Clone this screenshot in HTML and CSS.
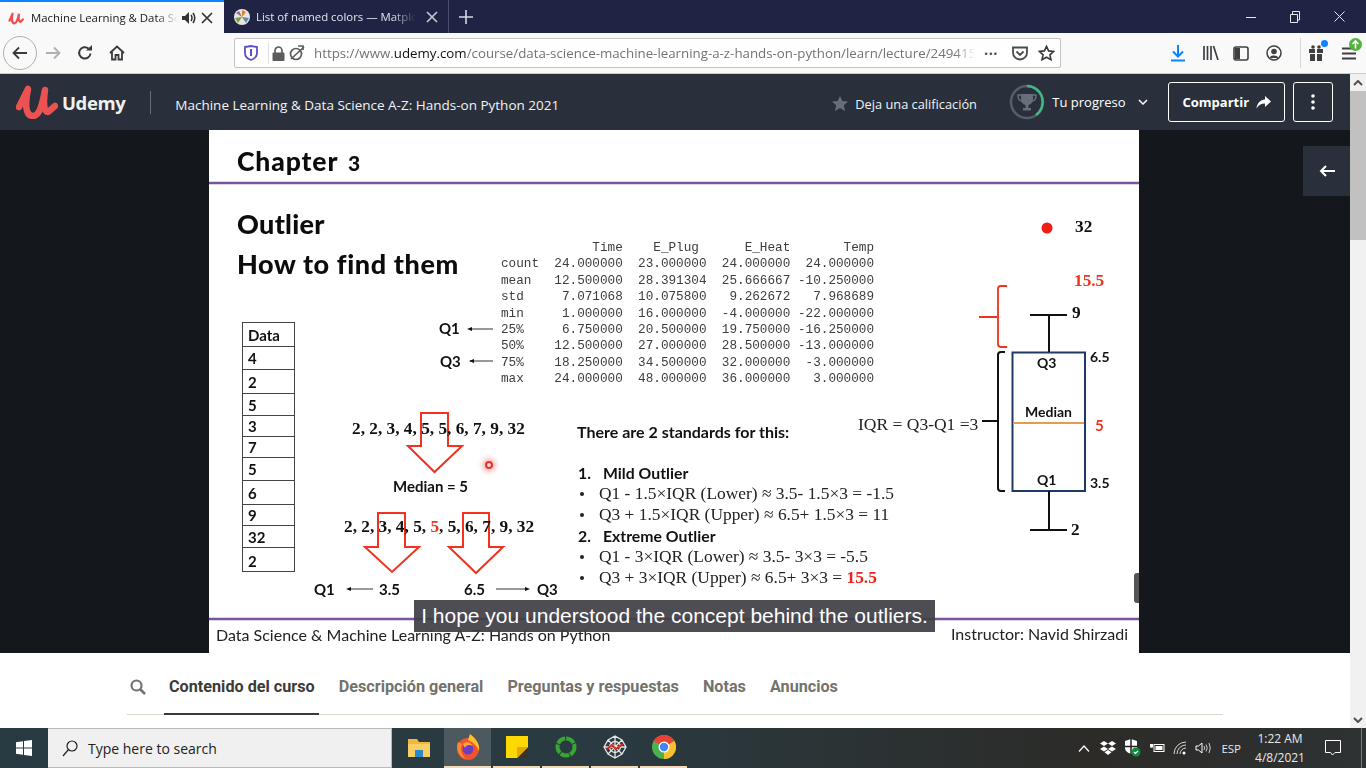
FILE: index.html
```html
<!DOCTYPE html>
<html>

<head>
  <meta name="viewport" content="width=device-width,initial-scale=1.0">
  <meta charset="utf-8">
  <title>Machine Learning &amp; Data Science</title>
  <link rel="stylesheet" href="styles.css">
</head>

<body>
  <!-- browser tabs -->
  <div class="tabbar">
    <div class="tab tab-active">
      <svg class="fav" width="16" height="16" viewBox="0 0 42 34"><path d="M4 24 L12 6 M12 6 C9 20 10 31 17 31 C24 31 27 14 29 6 C27 18 28 26 33 27 L39 21" fill="none" stroke="#ec5252" stroke-width="6" stroke-linecap="round"/></svg>
      <span class="tab-text t1">Machine Learning &amp; Data Sc</span>
      <svg class="tab-sound" width="16" height="14" viewBox="0 0 16 14"><path d="M1 5 H4 L8 1 V13 L4 9 H1 Z" fill="#333"/><path d="M10 4 Q12 7 10 10 M12 2 Q15.500 7 12 12" fill="none" stroke="#333" stroke-width="1.500"/></svg>
      <svg class="tab-x" width="12" height="12" viewBox="0 0 12 12"><path d="M1 1 L11 11 M11 1 L1 11" stroke="#333" stroke-width="1.700"/></svg>
    </div>
    <div class="tab tab-other">
      <svg class="fav2" width="16" height="16" viewBox="0 0 16 16"><circle cx="8" cy="8" r="8" fill="#e9e6dc"/><path d="M8 8 L8 1 L12 3 Z" fill="#d9822b"/><path d="M8 8 L15 9 L12 14 Z" fill="#5b8db8"/><path d="M8 8 L4 14 L1 9 Z" fill="#7a9a4a"/><path d="M8 8 L2 4 L5 2 Z" fill="#8c6a9e"/></svg>
      <span class="tab-text t2">List of named colors — Matplo</span>
      <svg class="tab-x" width="12" height="12" viewBox="0 0 12 12"><path d="M1 1 L11 11 M11 1 L1 11" stroke="#c4c5cf" stroke-width="1.700"/></svg>
    </div>
    <div class="tab-plus">
      <svg width="14" height="14" viewBox="0 0 14 14"><path d="M7 0 V14 M0 7 H14" stroke="#d7d8e0" stroke-width="1.600"/></svg>
    </div>
    <div class="win-btns">
      <svg width="10" height="10" viewBox="0 0 10 10"><path d="M0 5.500 H10" stroke="#e8e8ee" stroke-width="1"/></svg>
      <svg width="10" height="12" viewBox="0 0 10 12"><path d="M.5 3.500 H7.500 V11.500 H.5 Z M2.500 3.500 V.5 H9.500 V9 H7.500" fill="none" stroke="#e8e8ee" stroke-width="1"/></svg>
      <svg width="11" height="11" viewBox="0 0 11 11"><path d="M.5 .5 L10.500 10.500 M10.500 .5 L.5 10.500" stroke="#e8e8ee" stroke-width="1"/></svg>
    </div>
  </div>

  <!-- browser toolbar -->
  <div class="toolbar">
    <div class="nav-back">
      <svg width="16" height="14" viewBox="0 0 16 14"><path d="M15 7 H2 M7 1.500 L1.500 7 L7 12.500" fill="none" stroke="#3a3a3c" stroke-width="1.800"/></svg>
    </div>
    <svg class="nav-fwd" width="16" height="14" viewBox="0 0 16 14"><path d="M1 7 H14 M9 1.500 L14.500 7 L9 12.500" fill="none" stroke="#b1b1b3" stroke-width="1.800"/></svg>
    <svg class="nav-reload" width="16" height="16" viewBox="0 0 16 16"><path d="M13.500 8.500 A5.700 5.700 0 1 1 11.500 3.500" fill="none" stroke="#3a3a3c" stroke-width="2"/><path d="M9 5.500 H15 V0 Z" fill="#3a3a3c"/></svg>
    <svg class="nav-home" width="16" height="16" viewBox="0 0 16 16"><path d="M1 8 L8 1.500 L15 8 M3 7 V14.500 H6.500 V10 H9.500 V14.500 H13 V7" fill="none" stroke="#3a3a3c" stroke-width="1.800"/></svg>
    <div class="urlbar">
      <svg class="url-shield" width="14" height="16" viewBox="0 0 14 16"><path d="M1 2 L7 1 L13 2 V8 C13 12 10 14 7 15 C4 14 1 12 1 8 Z" fill="#fff" stroke="#5a4fcf" stroke-width="1.800"/><path d="M7 4 V11" stroke="#5a4fcf" stroke-width="2"/></svg>
      <span class="url-sep"></span>
      <svg class="url-lock" width="13" height="15" viewBox="0 0 13 15"><path d="M3 7 V4.500 A3.500 3.500 0 0 1 10 4.500 V7" fill="none" stroke="#5c5c5f" stroke-width="1.700"/><rect x="0.500" y="6.500" width="12" height="8.500" rx="1" fill="#5c5c5f"/></svg>
      <svg class="url-perm" width="16" height="16" viewBox="0 0 16 16"><circle cx="7" cy="9" r="5.500" fill="none" stroke="#5c5c5f" stroke-width="1.700"/><path d="M2 14 L15 2 M9 1 H14 V5" fill="none" stroke="#5c5c5f" stroke-width="1.700"/></svg>
      <div class="url-text">https://www.<b>udemy.com</b>/course/data-science-machine-learning-a-z-hands-on-python/learn/lecture/249415</div>
      <span class="url-dots">•••</span>
      <svg class="url-pocket" width="16" height="15" viewBox="0 0 16 15"><path d="M1 1.500 H15 V6.500 A7 7 0 0 1 1 6.500 Z M4.500 5.500 L8 9 L11.500 5.500" fill="none" stroke="#4a4a4f" stroke-width="1.800"/></svg>
      <svg class="url-star" width="17" height="16" viewBox="0 0 17 16"><path d="M8.500 1.300 L10.600 5.900 L15.700 6.400 L11.900 9.800 L13 14.700 L8.500 12.200 L4 14.700 L5.100 9.800 L1.300 6.400 L6.400 5.900 Z" fill="none" stroke="#3a3a3c" stroke-width="1.600"/></svg>
    </div>
    <div class="tool-right">
      <svg width="14" height="17" viewBox="0 0 14 17"><path d="M7 0 V11 M2 6.500 L7 11.500 L12 6.500 M0 15.500 H14" fill="none" stroke="#0a84ff" stroke-width="2"/></svg>
      <svg class="tr-lib" width="16" height="14" viewBox="0 0 16 14"><path d="M1 0 V14 M4.500 0 V14 M8 0 V14 M10.500 0 L15 14" fill="none" stroke="#3f3f42" stroke-width="1.700"/></svg>
      <svg class="tr-side" width="16" height="15" viewBox="0 0 16 15"><rect x="1" y="1" width="14" height="13" rx="2" fill="none" stroke="#3f3f42" stroke-width="1.600"/><rect x="2" y="2" width="5" height="11" fill="#3f3f42"/></svg>
      <svg class="tr-acct" width="16" height="16" viewBox="0 0 16 16"><circle cx="8" cy="8" r="7" fill="none" stroke="#3f3f42" stroke-width="1.500"/><circle cx="8" cy="6.500" r="2.800" fill="#3f3f42"/><path d="M3.500 13 C4 9.500 12 9.500 12.500 13 Z" fill="#3f3f42"/></svg>
      <span class="tool-div"></span>
      <div class="gift">
        <svg width="14" height="16" viewBox="0 0 14 16"><path d="M0 4 H6 V8 H0 Z M8 4 H14 V8 H8 Z M1 9 H6 V16 H1 Z M8 9 H13 V16 H8 Z" fill="#3f3f42"/><circle cx="4" cy="2" r="1.800" fill="#3f3f42"/><circle cx="10" cy="2" r="1.800" fill="#3f3f42"/></svg>
        <span class="gift-dot"></span>
      </div>
      <div class="menu">
        <svg width="14" height="13" viewBox="0 0 14 13"><path d="M0 1.500 H14 M0 6.500 H14 M0 11.500 H14" stroke="#3f3f42" stroke-width="1.800"/></svg>
        <svg class="menu-up" width="13" height="13" viewBox="0 0 13 13"><circle cx="6.500" cy="6.500" r="6.500" fill="#54b33e"/><path d="M6.500 10.500 V3 M3.500 6 L6.500 3 L9.500 6" fill="none" stroke="#fff" stroke-width="1.600"/></svg>
      </div>
    </div>
  </div>

  <div class="page">
    <div class="main">
      <!-- udemy header -->
      <div class="course-header">
        <svg class="logo-u" width="42" height="34" viewBox="0 0 42 34"><path d="M3 22 L12 4 C9 18 9 31 17 31 C25 31 27 14 29 5 C27 18 28 27 32 27 L39 21" fill="none" stroke="#ec5252" stroke-width="6.500" stroke-linecap="round" stroke-linejoin="round"/></svg>
        <span class="logo-text">Udemy</span>
        <span class="head-sep"></span>
        <span class="course-title">Machine Learning &amp; Data Science A-Z: Hands-on Python 2021</span>
        <svg class="rate-star" width="16" height="15" viewBox="0 0 16 15"><path d="M8 0 L10.300 5 L16 5.600 L11.800 9.300 L13 15 L8 12.100 L3 15 L4.200 9.300 L0 5.600 L5.700 5 Z" fill="#686f7a"/></svg>
        <span class="rate-text">Deja una calificación</span>
        <svg class="trophy" width="36" height="36" viewBox="0 0 36 36">
          <circle cx="18" cy="18" r="16" fill="none" stroke="#585e69" stroke-width="2.500"/>
          <path d="M18 2 A16 16 0 0 1 27 31" fill="none" stroke="#41b883" stroke-width="2.500"/>
          <path d="M12 10 H24 V15 C24 19 21 21 18 21 C15 21 12 19 12 15 Z M16.500 21 H19.500 V24 H22 V26.500 H14 V24 H16.500 Z" fill="#686f7a"/>
          <path d="M12 11 H9 C9 15 10 17 13 17 M24 11 H27 C27 15 26 17 23 17" fill="none" stroke="#686f7a" stroke-width="1.500"/>
        </svg>
        <span class="progress-text">Tu progreso</span>
        <svg class="progress-chev" width="10" height="6" viewBox="0 0 10 6"><path d="M1 1 L5 5 L9 1" fill="none" stroke="#fff" stroke-width="1.500"/></svg>
        <div class="share-btn">Compartir
          <svg width="15" height="13" viewBox="0 0 15 13"><path d="M9 0 L15 5.500 L9 11 V7.500 C5 7.500 2.500 9 0.500 12.500 C1 7.500 4 3.800 9 3.500 Z" fill="#fff"/></svg>
        </div>
        <div class="more-btn">
          <svg width="4" height="16" viewBox="0 0 4 16"><circle cx="2" cy="2" r="1.800" fill="#fff"/><circle cx="2" cy="8" r="1.800" fill="#fff"/><circle cx="2" cy="14" r="1.800" fill="#fff"/></svg>
        </div>
      </div>

      <!-- video -->
      <div class="video">
        <div class="slide">
          <svg class="slide-art" width="930" height="523" viewBox="209 130 930 523">
            <path d="M209 183 H1139 M209 619 H1139" stroke="#7a539b" stroke-width="2.500"/>
            <!-- arrows -->
            <path class="red-arrow" d="M421 413 H448 V446 H462 L434.500 472 L408 446 H421 Z"/>
            <path class="red-arrow" d="M378 513 H405 V547 H419 L392 572 L365 547 H378 Z"/>
            <path class="red-arrow" d="M463 513 H489 V547 H503 L476 573 L449 547 H463 Z"/>
            <!-- small black arrows -->
            <path class="thin" d="M470 329 H493 M470 361 H493 M350 589 H373 M496 589 H526"/>
            <path d="M467 329 L472 327 V331 Z M469 361 L474 359 V363 Z M346 589 L351 587 V591 Z M530 589 L525 587 V591 Z" fill="#111"/>
            <!-- box plot -->
            <rect x="1012.500" y="352.500" width="72.500" height="138.500" fill="none" stroke="#1f3864" stroke-width="2"/>
            <path d="M1013 423 H1084" stroke="#e89a4f" stroke-width="2"/>
            <path class="whisk" d="M1030 315 H1067 M1049 315 V352 M1049 491 V530 M1030 530 H1067"/>
            <path class="whisk" d="M1005 352 H1001 Q998 352 998 355 V488 Q998 491 1001 491 H1005 M982 421 H997"/>
            <path d="M1007 286 H1001 Q998 286 998 289 V344 Q998 347 1001 347 H1007 M979 317 H997" fill="none" stroke="#f0321e" stroke-width="1.800"/>
            <circle cx="1047" cy="228" r="5.500" fill="#f01e14"/>
          </svg>

          <span class="s-title t-chapter">Chapter <small>3</small></span>
          <span class="s-title t-outlier">Outlier</span>
          <span class="s-title t-how">How to find them</span>

          <pre class="describe">            Time    E_Plug      E_Heat       Temp
count  24.000000  23.000000  24.000000  24.000000
mean   12.500000  28.391304  25.666667 -10.250000
std     7.071068  10.075800   9.262672   7.968689
min     1.000000  16.000000  -4.000000 -22.000000
25%     6.750000  20.500000  19.750000 -16.250000
50%    12.500000  27.000000  28.500000 -13.000000
75%    18.250000  34.500000  32.000000  -3.000000
max    24.000000  48.000000  36.000000   3.000000</pre>

          <div class="data-table">
            <div>Data</div><div>4</div><div>2</div><div>5</div><div>3</div><div>7</div><div>5</div><div>6</div><div>9</div><div>32</div><div>2</div>
          </div>

          <span class="lb lb-q1a">Q1</span>
          <span class="lb lb-q3a">Q3</span>
          <span class="nums n1">2, 2, 3, 4, 5, 5, 6, 7, 9, 32</span>
          <span class="lb lb-med">Median = 5</span>
          <span class="nums n2">2, 2, 3, 4, 5, <em>5</em>, 5, 6, 7, 9, 32</span>
          <span class="lb lb-q1b">Q1</span>
          <span class="lb lb-35">3.5</span>
          <span class="lb lb-65">6.5</span>
          <span class="lb lb-q3b">Q3</span>

          <div class="standards">
            <p class="st-head">There are 2 standards for this:</p>
            <p class="st-num"><span>1.</span>Mild Outlier</p>
            <p class="st-item">Q1 - 1.5×IQR (Lower) ≈ 3.5- 1.5×3 = -1.5</p>
            <p class="st-item">Q3 + 1.5×IQR (Upper) ≈ 6.5+ 1.5×3 = 11</p>
            <p class="st-num"><span>2.</span>Extreme Outlier</p>
            <p class="st-item">Q1 - 3×IQR (Lower) ≈ 3.5- 3×3 = -5.5</p>
            <p class="st-item">Q3 + 3×IQR (Upper) ≈ 6.5+ 3×3 = <b>15.5</b></p>
          </div>

          <span class="nums b-32">32</span>
          <span class="nums b-155">15.5</span>
          <span class="nums b-9">9</span>
          <span class="nums b-2">2</span>
          <span class="lb b-q3">Q3</span>
          <span class="lb b-median">Median</span>
          <span class="lb b-q1">Q1</span>
          <span class="lb b-65">6.5</span>
          <span class="lb b-5">5</span>
          <span class="lb b-35">3.5</span>
          <span class="iqr">IQR = Q3-Q1 =3</span>

          <span class="foot foot-l">Data Science &amp; Machine Learning A-Z: Hands on Python</span>
          <span class="foot foot-r">Instructor: Navid Shirzadi</span>
          <span class="cursor-dot"></span>
          <span class="scrub"></span>
        </div>
        <div class="caption">I hope you understood the concept behind the outliers.</div>
        <div class="back-btn">
          <svg width="16" height="12" viewBox="0 0 16 12"><path d="M16 6 H2 M7 1 L2 6 L7 11" fill="none" stroke="#fff" stroke-width="2"/></svg>
        </div>
      </div>

      <!-- course tabs -->
      <div class="course-tabs">
        <svg class="ct-search" width="16" height="16" viewBox="0 0 16 16"><circle cx="6.500" cy="6.500" r="5" fill="none" stroke="#73726c" stroke-width="2.200"/><path d="M10 10 L15 15" stroke="#73726c" stroke-width="2.500"/></svg>
        <span class="ct ct-on">Contenido del curso</span>
        <span class="ct">Descripción general</span>
        <span class="ct">Preguntas y respuestas</span>
        <span class="ct">Notas</span>
        <span class="ct">Anuncios</span>
      </div>
    </div>

    <div class="scrollbar">
      <svg width="10" height="6" viewBox="0 0 10 6"><path d="M1 5 L5 1 L9 5" fill="none" stroke="#505050" stroke-width="2"/></svg>
      <div class="thumb"></div>
      <svg class="scroll-down" width="10" height="6" viewBox="0 0 10 6"><path d="M1 1 L5 5 L9 1" fill="none" stroke="#505050" stroke-width="2"/></svg>
    </div>
  </div>

  <!-- windows taskbar -->
  <div class="taskbar">
    <div class="start">
      <svg width="16" height="16" viewBox="0 0 16 16"><path d="M0 2.300 L7 1.300 V7.500 H0 Z M8 1.100 L16 0 V7.500 H8 Z M0 8.500 H7 V14.700 L0 13.700 Z M8 8.500 H16 V16 L8 14.900 Z" fill="#fff"/></svg>
    </div>
    <div class="search">
      <svg width="16" height="17" viewBox="0 0 16 17"><circle cx="10" cy="6" r="5" fill="none" stroke="#222" stroke-width="1.200"/><path d="M6.500 9.500 L1 16" stroke="#222" stroke-width="1.200"/></svg>
      <span>Type here to search</span>
    </div>
    <div class="apps">
      <div class="app">
        <svg width="22" height="20" viewBox="0 0 22 20"><path d="M0 1 H9 L11 4 H22 V19 H0 Z" fill="#f2b73c"/><rect x="0" y="6" width="22" height="13" fill="#f7cf62"/><rect x="7" y="12" width="8" height="7" fill="#2f86c9"/></svg>
      </div>
      <div class="app app-on">
        <svg width="24" height="26" viewBox="0 0 24 26"><circle cx="12" cy="15" r="11" fill="#f0542e"/><path d="M14 0 C22 6 24 12 23 17 C20 10 16 8 12 6 Z" fill="#ffbc2e"/><path d="M2 8 C0 14 2 22 10 25 C5 21 4 14 6 10 Z" fill="#ff8a2b"/><circle cx="12" cy="15" r="5.500" fill="#6b3fc0"/><path d="M7 10 C10 7 15 8 17 12 C13 10 10 11 9 14 Z" fill="#ffa436"/></svg>
      </div>
      <div class="app">
        <svg width="22" height="22" viewBox="0 0 22 22"><rect width="22" height="22" fill="#ffd800"/><path d="M22 11 L11 22 H22 Z" fill="#38322a"/><path d="M11 22 V11 H22 Z" fill="#e7a800"/></svg>
      </div>
      <div class="app">
        <svg width="22" height="22" viewBox="0 0 22 22"><circle cx="11" cy="11" r="8.500" fill="none" stroke="#39a535" stroke-width="4" stroke-dasharray="9 1"/></svg>
      </div>
      <div class="app">
        <svg width="24" height="24" viewBox="0 0 24 24"><g fill="none" stroke="#e6e6e6" stroke-width="1.300"><path d="M12 1 L19 5 L23 12 L19 19 L12 23 L5 19 L1 12 L5 5 Z M12 1 V23 M1 12 H23 M5 5 L19 19 M19 5 L5 19"/><circle cx="12" cy="12" r="5.500"/></g><path d="M4 14 L9 10 L13 14 L20 9" fill="none" stroke="#e2231a" stroke-width="2"/></svg>
      </div>
      <div class="app">
        <svg width="24" height="24" viewBox="0 0 24 24"><circle cx="12" cy="12" r="12" fill="#4caf50"/><path d="M12 12 L1.600 6 A12 12 0 0 1 22.400 6 Z" fill="#ea4335"/><path d="M12 12 L22.400 6 A12 12 0 0 1 12 24 Z" fill="#fbc02d"/><circle cx="12" cy="12" r="5.500" fill="#fff"/><circle cx="12" cy="12" r="4.200" fill="#4285f4"/></svg>
      </div>
    </div>
    <div class="tray">
      <svg class="tray-up" width="12" height="7" viewBox="0 0 12 7"><path d="M1 6.500 L6 1 L11 6.500" fill="none" stroke="#fff" stroke-width="1.200"/></svg>
      <svg width="16" height="14" viewBox="0 0 16 14"><path d="M4 0 L8 2.500 L4 5 L0 2.500 Z M12 0 L16 2.500 L12 5 L8 2.500 Z M4 5.500 L8 8 L4 10.500 L0 8 Z M12 5.500 L16 8 L12 10.500 L8 8 Z M8 9 L11.500 11.300 L8 14 L4.500 11.300 Z" fill="#fff"/></svg>
      <svg width="17" height="18" viewBox="0 0 17 18"><path d="M1 2 L7 0 L13 2 V9 C13 12 10 14 7 15 C4 14 1 12 1 9 Z" fill="#fff"/><path d="M7 0 V15 M1 7.500 H13" stroke="#222" stroke-width="1.500"/><circle cx="12" cy="13" r="4.500" fill="#118a3e"/><path d="M10 13 L11.500 14.500 L14 11.800" fill="none" stroke="#fff" stroke-width="1.200"/></svg>
      <svg width="16" height="10" viewBox="0 0 16 10"><rect x="5" y="1.500" width="10" height="7" fill="none" stroke="#fff"/><rect x="6.500" y="3" width="7" height="4" fill="#fff"/><path d="M1 1 V4 A2 2 0 0 0 4 4 V1 Z" fill="#fff"/></svg>
      <svg width="14" height="14" viewBox="0 0 14 14"><g fill="none" stroke="#d8d8d8" stroke-width="1"><path d="M1 13 A12 12 0 0 1 13 1"/><path d="M4 13 A9 9 0 0 1 13 4"/><path d="M7 13 A6 6 0 0 1 13 7"/></g><circle cx="11" cy="12" r="1.500" fill="#fff"/></svg>
      <svg width="16" height="12" viewBox="0 0 16 12"><path d="M1 4 H3.500 L7 1 V11 L3.500 8 H1 Z" fill="none" stroke="#fff"/><path d="M9 4 Q10.500 6 9 8 M11 2.500 Q13.500 6 11 9.500 M14 1 Q16.500 6 14 11" fill="none" stroke="#cfcfcf"/></svg>
      <span class="lang">ESP</span>
      <div class="clock"><span>1:22 AM</span><span>4/8/2021</span></div>
      <svg class="notif" width="16" height="16" viewBox="0 0 16 16"><path d="M.5 .5 H15.500 V12.500 H10 L7.500 15 L5.500 12.500 H.5 Z" fill="none" stroke="#fff"/></svg>
      <span class="show-desk"></span>
    </div>
  </div>
</body>

</html>
```
FILE: styles.css
```css
* {
  box-sizing: border-box;
}

body {
  margin: 0;
  width: 1366px;
  height: 768px;
  overflow: hidden;
  background-color: #fff;
  font-family: "Open Sans", "Noto Sans", sans-serif;
}

svg {
  display: block;
  flex: none;
}

/* ---- tabs ---- */
.tabbar {
  display: flex;
  align-items: stretch;
  height: 33px;
  background-color: #1f2444;
}

.tab {
  display: flex;
  align-items: center;
  position: relative;
  font-size: 11.400px;
}

.tab-active {
  width: 224px;
  background-color: #f9f9fa;
  border-top: 2px solid #0a84ff;
  color: #18181a;
  padding-left: 8px;
}

.tab-other {
  width: 225px;
  color: #e4e5ec;
  padding-left: 10px;
  border-right: 1px solid #4a4e6a;
}

.tab-text {
  display: block;
  white-space: nowrap;
  -webkit-mask-image: linear-gradient(to right, #000 85%, transparent);
  mask-image: linear-gradient(to right, #000 85%, transparent);
}

.t1 {
  width: 147px;
  margin-left: 7px;
}

.t2 {
  width: 160px;
  margin-left: 6px;
}

.tab-sound {
  margin-left: 3px;
}

.tab-active .tab-x {
  margin-left: 4px;
}

.tab-other .tab-x {
  margin-left: 10px;
}

.tab-plus {
  display: flex;
  align-items: center;
  padding-left: 10px;
}

.win-btns {
  margin-left: auto;
  display: flex;
  align-items: center;
  gap: 34px;
  padding-right: 21px;
}

/* ---- toolbar ---- */
.toolbar {
  display: flex;
  align-items: center;
  height: 41px;
  background-color: #f9f9fa;
  border-bottom: 1px solid #ccc;
  padding-left: 3px;
}

.nav-back {
  width: 34px;
  height: 34px;
  border: 1px solid #b1b1b3;
  border-radius: 50%;
  display: flex;
  align-items: center;
  justify-content: center;
}

.nav-fwd {
  margin-left: 8px;
}

.nav-reload {
  margin-left: 16px;
}

.nav-home {
  margin-left: 16px;
}

.urlbar {
  display: flex;
  align-items: center;
  width: 827px;
  height: 30px;
  margin-left: 109px;
  background-color: #fff;
  border: 1px solid #c4c4c6;
  border-radius: 2px;
  padding-left: 9px;
}

.url-sep {
  width: 1px;
  height: 22px;
  background-color: #e0e0e2;
  margin-left: 10px;
}

.url-lock {
  margin-left: 3px;
}

.url-perm {
  margin-left: 4px;
}

.url-text {
  width: 661px;
  margin-left: 9px;
  font-size: 13.300px;
  color: #737373;
  white-space: nowrap;
  -webkit-mask-image: linear-gradient(to right, #000 97%, transparent);
  mask-image: linear-gradient(to right, #000 97%, transparent);
}

.url-text b {
  font-weight: 400;
  color: #111;
}

.url-dots {
  width: 20px;
  margin-left: 9px;
  font-size: 11px;
  letter-spacing: .5px;
  color: #4a4a4f;
}

.url-pocket {
  margin-left: 8px;
}

.url-star {
  margin-left: 10px;
}

.tool-right {
  display: flex;
  align-items: center;
  margin-left: 110px;
  gap: 18px;
}

.tr-side {
  margin-left: -4px;
}

.tr-acct {
  margin-left: -1px;
}

.tool-div {
  width: 1px;
  height: 30px;
  background-color: #d8d8da;
}

.gift,
.menu {
  position: relative;
}

.gift {
  margin-left: -10px;
}

.gift-dot {
  position: absolute;
  right: -5px;
  top: -5px;
  width: 7px;
  height: 7px;
  border-radius: 50%;
  background-color: #0a84ff;
}

.menu {
  margin-left: 1px;
}

.menu-up {
  position: absolute;
  right: -6px;
  top: -9px;
}

/* ---- page ---- */
.page {
  display: flex;
  height: 654px;
}

.main {
  width: 1350px;
  display: flex;
  flex-direction: column;
}

.course-header {
  display: flex;
  align-items: center;
  height: 56px;
  flex: none;
  background-color: #29303b;
  color: #fff;
  padding-left: 16px;
}

.logo-text {
  margin-left: 4px;
  font-size: 18.500px;
  font-weight: 700;
  letter-spacing: -.4px;
  color: #f0f0f0;
}

.head-sep {
  width: 1px;
  height: 23px;
  background-color: #686f7a;
  margin-left: 25px;
}

.course-title {
  margin-left: 24px;
  width: 657px;
  padding-top: 5px;
  font-size: 13.500px;
  color: #f2f3f5;
}

.rate-star {
  margin-top: 2px;
}

.rate-text {
  margin-left: 7px;
  width: 154px;
  padding-top: 4px;
  font-size: 12.800px;
  color: #f2f3f5;
}

.progress-text {
  margin-left: 7px;
  width: 86px;
  font-size: 13px;
}

.share-btn {
  display: flex;
  align-items: center;
  justify-content: center;
  gap: 7px;
  width: 117px;
  height: 40px;
  margin-left: 20px;
  border: 1px solid #fff;
  border-radius: 3px;
  font-size: 13px;
  font-weight: 700;
}

.more-btn {
  display: flex;
  align-items: center;
  justify-content: center;
  width: 40px;
  height: 40px;
  margin-left: 8px;
  border: 1px solid #fff;
  border-radius: 3px;
}

.video {
  position: relative;
  height: 523px;
  flex: none;
  background-color: #14171c;
  padding-left: 209px;
}

.slide {
  position: relative;
  width: 930px;
  height: 523px;
  background-color: #fff;
  color: #111;
  overflow: hidden;
  filter: blur(.35px);
}

.slide-art {
  position: absolute;
  left: 0;
  top: 0;
}

.red-arrow {
  fill: none;
  stroke: #f0321e;
  stroke-width: 2;
}

.thin {
  fill: none;
  stroke: #333;
  stroke-width: 1;
}

.whisk {
  fill: none;
  stroke: #111;
  stroke-width: 2;
}

.slide span {
  position: absolute;
  white-space: nowrap;
}

.slide .st-num span {
  position: static;
}

.s-title {
  font-family: "Lato", sans-serif;
  font-weight: 900;
  line-height: 30px;
  left: 28px;
  color: #0c0c0c;
}

.s-title small {
  font-size: 21px;
}

.t-chapter {
  top: 16px;
  font-size: 26.500px;
  letter-spacing: .9px;
  word-spacing: 3px;
}

.t-outlier {
  top: 79px;
  font-size: 27px;
  letter-spacing: .3px;
}

.t-how {
  top: 119px;
  font-size: 27px;
  letter-spacing: .6px;
}

.describe {
  position: absolute;
  left: 292px;
  top: 110px;
  margin: 0;
  font-family: "Liberation Mono", monospace;
  font-size: 12.700px;
  line-height: 16.400px;
  color: #3d3d3d;
}

.data-table {
  position: absolute;
  left: 33px;
  top: 192px;
  width: 53px;
  height: 250px;
  display: grid;
  grid-template-rows: 24px 23px 24px 22px 21px 21px 23px 24px 21px 22px 25px;
  border: 1px solid #444;
  font-family: "Lato", sans-serif;
  font-size: 15px;
  font-weight: 700;
}

.data-table div {
  display: flex;
  align-items: center;
  padding-left: 5px;
  border-bottom: 1px solid #444;
}

.data-table div:last-child {
  border-bottom: 0;
}

.lb {
  font-family: "Lato", sans-serif;
  font-size: 15px;
  font-weight: 700;
  line-height: 20px;
}

.nums {
  font-family: "Liberation Serif", serif;
  font-size: 17.300px;
  font-weight: 700;
  line-height: 20px;
}

.nums em {
  font-style: normal;
  color: #f0321e;
}

.lb-q1a { left: 230px; top: 188px; }
.lb-q3a { left: 231px; top: 221px; }
.n1 { left: 143px; top: 289px; }
.lb-med { left: 184px; top: 346px; }
.n2 { left: 135px; top: 387px; }
.lb-q1b { left: 105px; top: 449px; }
.lb-35 { left: 170px; top: 449px; }
.lb-65 { left: 255px; top: 449px; }
.lb-q3b { left: 328px; top: 449px; }

.standards {
  position: absolute;
  left: 368px;
  top: 291px;
  font-family: "Liberation Serif", serif;
  font-size: 17.400px;
  color: #222;
}

.standards p {
  margin: 0;
  height: 21px;
  line-height: 21px;
  white-space: nowrap;
}

.standards .st-head {
  height: 41px;
  font-family: "Lato", sans-serif;
  font-size: 16px;
  font-weight: 700;
  color: #111;
}

.st-num {
  font-family: "Lato", sans-serif;
  font-size: 15.800px;
  font-weight: 700;
  color: #111;
}

.st-num span {
  display: inline-block;
  width: 26px;
  padding-left: 1px;
}

.st-item {
  padding-left: 22px;
  position: relative;
}

.st-item::before {
  content: "";
  position: absolute;
  left: 3px;
  top: 9px;
  width: 4px;
  height: 4px;
  border-radius: 50%;
  background-color: #222;
}

.st-item b {
  color: #f0211a;
}

.b-32 { left: 866px; top: 87px; }
.b-155 { left: 865px; top: 141px; color: #f0321e; }
.b-9 { left: 863px; top: 173px; }
.b-2 { left: 862px; top: 390px; }
.b-q3 { left: 828px; top: 223px; font-size: 14px; }
.b-median { left: 816px; top: 272px; font-size: 14px; }
.b-q1 { left: 828px; top: 340px; font-size: 14px; }
.b-65 { left: 881px; top: 217px; font-size: 14px; }
.b-5 { left: 886px; top: 285px; color: #f0321e; }
.b-35 { left: 881px; top: 343px; font-size: 14px; }

.iqr {
  left: 649px;
  top: 284px;
  font-family: "Liberation Serif", serif;
  font-size: 17.500px;
  line-height: 20px;
  color: #222;
}

.foot {
  font-family: "Lato", sans-serif;
  font-size: 16px;
  line-height: 20px;
  color: #222;
}

.foot-l { left: 7px; top: 495px; }
.foot-r { left: 742px; top: 494px; }

.cursor-dot {
  left: 276px;
  top: 331px;
  width: 8px;
  height: 8px;
  border: 2px solid #e8302a;
  border-radius: 50%;
  background-color: #ffd9d6;
  box-shadow: 0 0 5px 3px rgba(240, 80, 70, .4);
}

.scrub {
  left: 925px;
  top: 443px;
  width: 6px;
  height: 30px;
  border-radius: 3px 0 0 3px;
  background-color: #555;
}

.caption {
  position: absolute;
  left: 414px;
  top: 470px;
  width: 521px;
  height: 32px;
  background-color: rgba(62, 62, 68, .92);
  color: #fff;
  font-family: "Liberation Sans", Arial, sans-serif;
  font-size: 21px;
  line-height: 32px;
  text-align: center;
  white-space: nowrap;
}

.back-btn {
  position: absolute;
  left: 1303px;
  top: 16px;
  width: 47px;
  height: 50px;
  display: flex;
  align-items: center;
  justify-content: center;
  background-color: #29303b;
}

/* ---- course tabs ---- */
.course-tabs {
  display: flex;
  align-items: center;
  gap: 24px;
  height: 62px;
  margin: 0 127px;
  width: 1096px;
  padding-left: 3px;
  padding-top: 8px;
  padding-bottom: 2px;
  border-bottom: 1px solid #dcdacb;
  position: relative;
  font-family: "Roboto", "Open Sans", sans-serif;
  font-size: 16.200px;
  font-weight: 700;
  color: #73726c;
}

.ct-search {
  margin-right: -1px;
}

.ct-on {
  color: #3c3b37;
}

.ct-on::after {
  content: "";
  position: absolute;
  left: 37px;
  bottom: -1px;
  width: 155px;
  height: 2px;
  background-color: #3c3b37;
}

.scrollbar {
  width: 16px;
  background-color: #f1f1f1;
  display: flex;
  flex-direction: column;
  align-items: center;
  padding-top: 6px;
  position: relative;
}

.thumb {
  width: 16px;
  height: 149px;
  margin-top: 5px;
  background-color: #c1c1c1;
}

.scroll-down {
  position: absolute;
  bottom: 5px;
}

/* ---- taskbar ---- */
.taskbar {
  display: flex;
  height: 40px;
  background: linear-gradient(to right, #283a42, #2a3a40 45%, #2c2b28 80%, #2e3233);
  color: #fff;
}

.start {
  width: 48px;
  display: flex;
  align-items: center;
  justify-content: center;
}

.search {
  width: 344px;
  display: flex;
  align-items: center;
  gap: 10px;
  padding-left: 14px;
  background-color: #f0f0f0;
  border: 1px solid #b8b8b8;
  border-left: 0;
  color: #222;
  font-size: 14px;
}

.apps {
  display: flex;
  margin-left: 3px;
  gap: 2px;
}

.app {
  width: 47px;
  display: flex;
  align-items: center;
  justify-content: center;
  border-bottom: 2px solid #f4d9b8;
}

.app:first-child {
  border-bottom: 0;
}

.app-on {
  background-color: #4c5a60;
}

.tray {
  margin-left: auto;
  display: flex;
  align-items: center;
  gap: 8px;
  position: relative;
  padding-right: 25px;
}

.tray-up {
  margin-right: 2px;
}

.lang {
  margin-left: 2px;
  font-size: 11.500px;
  color: #e8e8e8;
}

.clock {
  display: flex;
  flex-direction: column;
  align-items: center;
  width: 62px;
  font-size: 12px;
  line-height: 19px;
  color: #e8e8e8;
}

.notif {
  margin-left: 6px;
}

.show-desk {
  position: absolute;
  right: 4px;
  top: 0;
  width: 1px;
  height: 40px;
  background-color: #777;
}
```
